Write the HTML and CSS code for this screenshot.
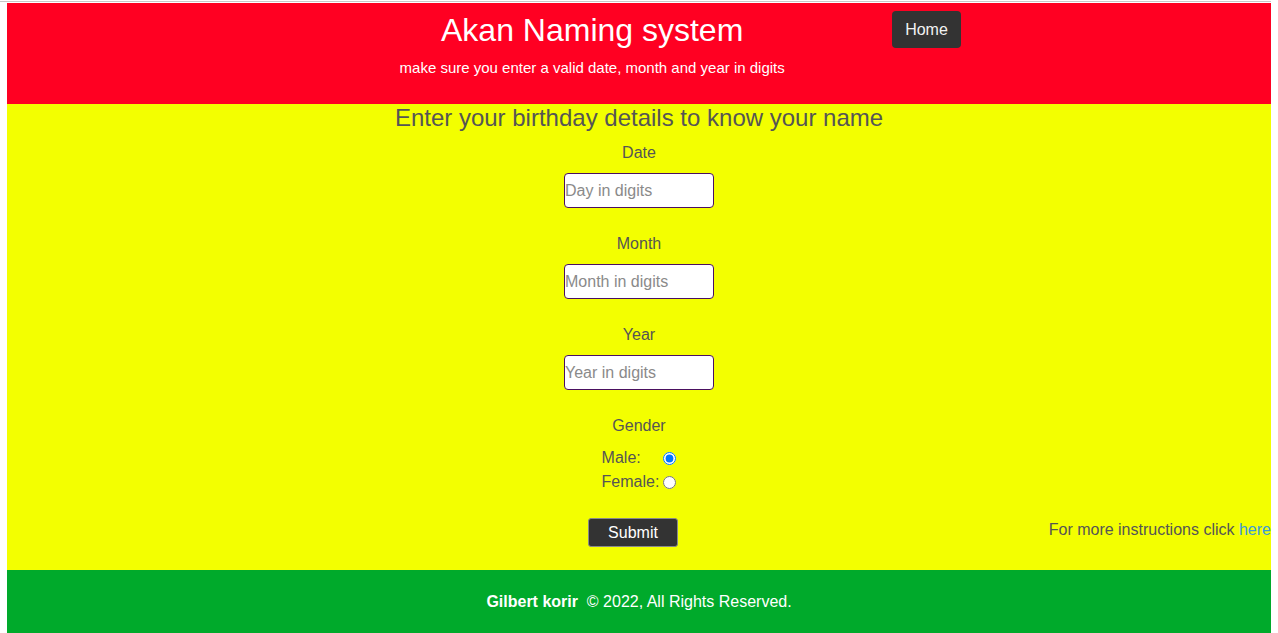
FILE: index.html
```html
<!DOCTYPE html>
<html lang="en">
<head>
<meta charset="utf-8">
<title>Akan Naming system</title>
<link rel="stylesheet" href="styles.css">
</head>
<body>
<div class="topline"></div>
<div class="page">
  <header class="header">
    <div class="brand">
      <h1 class="title">Akan Naming system</h1>
      <p class="subtitle">make sure you enter a valid date, month and year in digits</p>
    </div>
    <a class="home-btn" href="#">Home</a>
  </header>
  <main class="main">
    <h2 class="heading">Enter your birthday details to know your name</h2>
    <form class="form">
      <div class="field">
        <label class="label" for="day">Date</label>
        <input class="input" id="day" type="text" placeholder="Day in digits">
      </div>
      <div class="field">
        <label class="label" for="month">Month</label>
        <input class="input" id="month" type="text" placeholder="Month in digits">
      </div>
      <div class="field">
        <label class="label" for="year">Year</label>
        <input class="input" id="year" type="text" placeholder="Year in digits">
      </div>
      <div class="gender">
        <div class="label">Gender</div>
        <div class="radios">
          <label for="male">Male:</label>
          <input class="radio" type="radio" id="male" name="gender" checked>
          <label for="female">Female:</label>
          <input class="radio" type="radio" id="female" name="gender">
        </div>
      </div>
      <div class="actions">
        <div></div>
        <button class="submit" type="button">Submit</button>
        <p class="more">For more instructions click <a class="link" href="#">here</a></p>
      </div>
    </form>
  </main>
  <footer class="footer">
    <p class="footer-text"><strong>Gilbert korir</strong>&nbsp; © 2022, All Rights Reserved.</p>
  </footer>
</div>
</body>
</html>
```
FILE: styles.css
```css
html, body {
  margin: 0;
  padding: 0;
  background: #fff;
  overflow: hidden;
}
body {
  font-family: "Liberation Sans", Arial, sans-serif;
}
.topline {
  height: 1px;
  margin-top: 1px;
  margin-right: 7px;
  background: #c8c8c8;
}
.page {
  margin: 1px 7px 0 7px;
}
.header {
  background: #ff0022;
  height: 101px;
  display: flex;
  justify-content: center;
  align-items: flex-start;
  gap: 25px;
  color: #fff;
}
.brand {
  width: 550px;
  text-align: center;
}
.title {
  margin: 9px 0 0 0;
  font-size: 32px;
  font-weight: normal;
  line-height: 37px;
}
.subtitle {
  margin: 10px 0 0 0;
  font-size: 15px;
  line-height: 17px;
}
.home-btn {
  margin-top: 8px;
  background: #333333;
  color: #f2f2f2;
  text-decoration: none;
  font-size: 16px;
  line-height: 37px;
  height: 37px;
  padding: 0 13px;
  border-radius: 4px;
}
.main {
  background: #f3ff00;
  color: #555555;
  height: 466px;
  text-align: center;
}
.heading {
  margin: 0;
  font-size: 24px;
  font-weight: normal;
  line-height: 28px;
}
.form {
  display: flex;
  flex-direction: column;
  align-items: center;
  padding-top: 12px;
}
.field {
  display: flex;
  flex-direction: column;
  align-items: center;
  margin-bottom: 27px;
}
.label {
  font-size: 16px;
  line-height: 18px;
  display: block;
}
.input {
  margin-top: 11px;
  box-sizing: border-box;
  width: 150px;
  height: 35px;
  border: 1px solid #4a1060;
  border-radius: 4px;
  background: #fff;
  padding: 0;
  font-family: "Liberation Sans", Arial, sans-serif;
  font-size: 16px;
  color: #333;
}
.input::placeholder {
  color: #8a8a8a;
}
.gender {
  display: flex;
  flex-direction: column;
  align-items: center;
}
.radios {
  margin-top: 14px;
  display: grid;
  grid-template-columns: auto auto;
  row-gap: 6px;
  align-items: center;
  text-align: left;
  font-size: 16px;
  line-height: 18px;
}
.radio {
  margin: 0 0 0 4px;
  width: 13px;
  height: 13px;
}
.actions {
  align-self: stretch;
  display: grid;
  grid-template-columns: 1fr auto 1fr;
  align-items: center;
  margin-top: 27px;
}
.submit {
  margin-right: 12px;
  width: 90px;
  height: 29px;
  background: #333333;
  color: #fff;
  border: 1px solid #8a8a8a;
  border-radius: 3px;
  font-family: "Liberation Sans", Arial, sans-serif;
  font-size: 16px;
  padding: 0;
}
.more {
  margin: 0 0 6px 0;
  justify-self: end;
  font-size: 16px;
  line-height: 18px;
}
.link {
  color: #3a9ad9;
  text-decoration: none;
}
.footer {
  background: #00aa2b;
  height: 63px;
  display: flex;
  align-items: center;
  justify-content: center;
}
.footer-text {
  margin: 0;
  color: #fff;
  font-size: 16px;
  line-height: 18px;
  padding-top: 1px;
}
```
